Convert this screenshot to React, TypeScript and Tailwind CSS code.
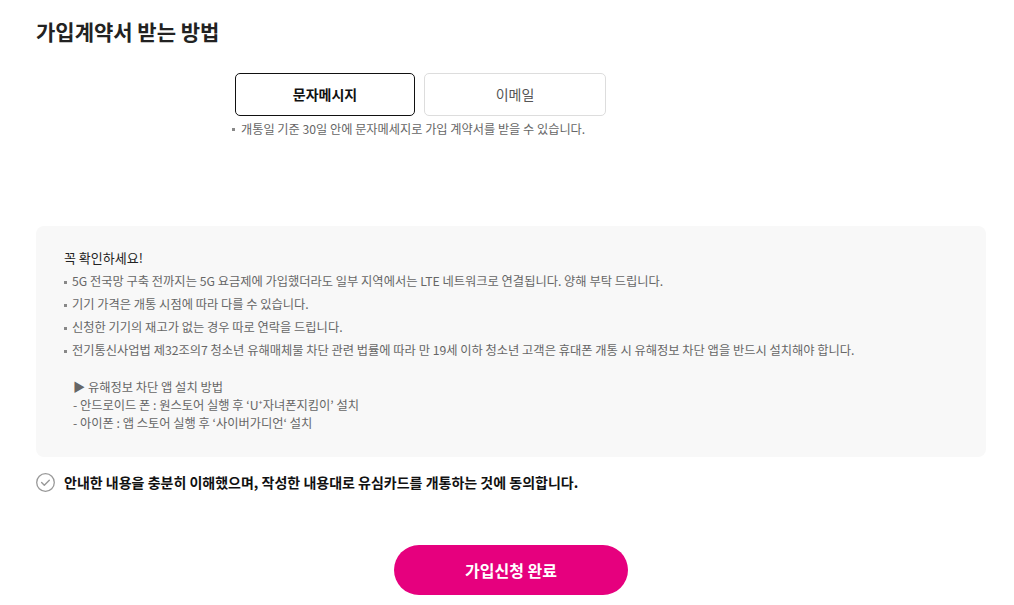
import { useState } from 'react';

const notices = [
  '5G 전국망 구축 전까지는 5G 요금제에 가입했더라도 일부 지역에서는 LTE 네트워크로 연결됩니다. 양해 부탁 드립니다.',
  '기기 가격은 개통 시점에 따라 다를 수 있습니다.',
  '신청한 기기의 재고가 없는 경우 따로 연락을 드립니다.',
  '전기통신사업법 제32조의7 청소년 유해매체물 차단 관련 법률에 따라 만 19세 이하 청소년 고객은 휴대폰 개통 시 유해정보 차단 앱을 반드시 설치해야 합니다.',
];

export default function App() {
  const [method, setMethod] = useState<'sms' | 'email'>('sms');

  return (
    <div className="w-[1014px] h-[605px] bg-white pl-[36px] pr-[28px] pt-[16px] text-[#222] overflow-hidden" style={{ fontFamily: '"Noto Sans CJK KR", "Noto Sans", sans-serif' }}>
      <h1 className="text-[21px] font-bold leading-[30px]">가입계약서 받는 방법</h1>

      {/* 받는 방법 선택 */}
      <div className="ml-[199px] mt-[27px]">
        <div className="flex gap-[9px]">
          <button
            onClick={() => setMethod('sms')}
            className={method === 'sms'
              ? 'w-[180px] h-[43px] rounded-[5px] border border-[#111] text-[14px] font-bold text-[#111]'
              : 'w-[180px] h-[43px] rounded-[5px] border border-[#ddd] text-[14px] text-[#555]'}
          >
            문자메시지
          </button>
          <button
            onClick={() => setMethod('email')}
            className={method === 'email'
              ? 'w-[182px] h-[43px] rounded-[5px] border border-[#111] text-[14px] font-bold text-[#111]'
              : 'w-[182px] h-[43px] rounded-[5px] border border-[#ddd] text-[14px] text-[#555]'}
          >
            이메일
          </button>
        </div>
        <p className="flex gap-[6px] mt-[4px] -ml-[3px] text-[12.2px] leading-[18px] text-[#666]">
          <span className="mt-[8px] w-[3px] h-[3px] bg-[#888] shrink-0" />
          개통일 기준 30일 안에 문자메세지로 가입 계약서를 받을 수 있습니다.
        </p>
      </div>

      {/* 꼭 확인하세요 */}
      <div className="mt-[88px] h-[231px] rounded-[8px] bg-[#f8f8f8] pl-[28px] pt-[22px]">
        <p className="text-[13px] leading-[20px] text-[#222]">꼭 확인하세요!</p>
        <ul className="mt-[2px]">
          {notices.map((n, i) => (
            <li key={i} className="flex gap-[5px] text-[12.25px] leading-[23px] text-[#666]">
              <span className="mt-[11px] w-[3px] h-[3px] bg-[#888] shrink-0" />
              {n}
            </li>
          ))}
        </ul>
        <div className="mt-[16px] ml-[9px] text-[12.25px] leading-[18px] text-[#666]">
          <p>▶ 유해정보 차단 앱 설치 방법</p>
          <p>- 안드로이드 폰 : 원스토어 실행 후 ‘U⁺자녀폰지킴이’ 설치</p>
          <p>- 아이폰 : 앱 스토어 실행 후 ‘사이버가디언‘ 설치</p>
        </div>
      </div>

      {/* 동의 */}
      <label className="flex items-center gap-[9px] mt-[15px]">
        <svg width="19" height="19" viewBox="0 0 19 19" fill="none">
          <circle cx="9.5" cy="9.5" r="8.8" stroke="#999" strokeWidth="1.3" />
          <path d="M5.6 9.6l2.7 2.7 5-5" stroke="#999" strokeWidth="1.4" strokeLinecap="round" strokeLinejoin="round" />
        </svg>
        <span className="text-[14px] font-bold text-[#111]">안내한 내용을 충분히 이해했으며, 작성한 내용대로 유심카드를 개통하는 것에 동의합니다.</span>
      </label>

      <div className="flex justify-center mt-[52px]">
        <button className="w-[234px] h-[50px] rounded-full bg-[#e6007e] text-white text-[16px] font-bold">가입신청 완료</button>
      </div>
    </div>
  );
}
